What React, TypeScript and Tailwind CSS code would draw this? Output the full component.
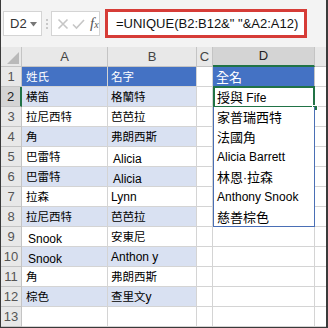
import React from "react";

const FONT = { fontFamily: '"Liberation Sans", "Noto Sans CJK TC", sans-serif' };

const colA = ["姓氏", "横笛", "拉尼西特", "角", "巴雷特", "巴雷特", "拉森", "拉尼西特", "Snook", "Snook", "角", "棕色", ""];
const colB = ["名字", "格蘭特", "芭芭拉", "弗朗西斯", "Alicia", "Alicia", "Lynn", "芭芭拉", "安東尼", "Anthon y", "弗朗西斯", "查里文y", ""];
const colD = ["全名", "授與 Fife", "家普瑞西特", "法國角", "Alicia Barrett", "林恩·拉森", "Anthony Snook", "慈善棕色", "", "", "", "", ""];

function Txt({ s, cjk }: { s: string; cjk: string }) {
  const parts = s.split(/([\u3400-\u9fff]+)/).filter((p) => p.length > 0);
  return (
    <span className="whitespace-pre">
      {parts.map((p, i) =>
        /[\u3400-\u9fff]/.test(p) ? (
          <span key={i} className={cjk} style={{ fontFamily: '"Noto Sans CJK TC", sans-serif' }}>
            {p}
          </span>
        ) : (
          <span key={i}>{p}</span>
        )
      )}
    </span>
  );
}

const isLatin = (s: string) => /^[A-Za-z ]+$/.test(s);

export default function App() {
  return (
    <div
      className="w-[328px] h-[328px] bg-white border-l border-r-2 border-b border-[#3a3a3a] overflow-hidden flex flex-col"
      style={FONT}
    >
      {/* Toolbar */}
      <div className="h-[47px] shrink-0 bg-[#f3f3f3] flex items-center">
        <div className="ml-[2px] w-[39px] h-[25px] bg-white border border-[#d4d4d4] flex items-center pl-[6px] gap-[3px]">
          <span className="text-[13px] text-[#333] leading-none">D2</span>
          <svg width="7" height="5" viewBox="0 0 7 5" className="mt-[1px]">
            <path d="M0 0 L7 0 L3.5 4.5 Z" fill="#777" />
          </svg>
        </div>
        <div className="w-[9px] flex flex-col items-center gap-[2px]">
          <div className="w-[2px] h-[2px] bg-[#c8c8c8]" />
          <div className="w-[2px] h-[2px] bg-[#c8c8c8]" />
          <div className="w-[2px] h-[2px] bg-[#c8c8c8]" />
        </div>
        <div className="w-[49px] h-[25px] bg-white border border-[#d4d4d4] flex items-center pl-[5px] gap-[3px]">
          <svg width="12" height="12" viewBox="0 0 12 12">
            <path d="M1.5 1.5 L10.5 10.5 M10.5 1.5 L1.5 10.5" stroke="#c6c6c6" strokeWidth="1.6" />
          </svg>
          <svg width="13" height="12" viewBox="0 0 13 12">
            <path d="M1 6.5 L4.5 10 L12 2" stroke="#c6c6c6" strokeWidth="1.6" fill="none" />
          </svg>
          <span
            className="text-[15px] italic text-[#555] leading-none ml-[2px]"
            style={{ fontFamily: '"Liberation Serif", serif' }}
          >
            f<span className="text-[10px]">x</span>
          </span>
        </div>
        <div className="ml-[5px] w-[202px] h-[29px] bg-white border-[3px] border-[#d63c37] flex items-center pl-[8px]">
          <span className="text-[13px] text-[#111] leading-none whitespace-pre">=UNIQUE(B2:B12&amp;" "&amp;A2:A12)</span>
        </div>
      </div>

      {/* Column headers */}
      <div className="h-[20px] shrink-0 flex bg-[#e8e8e8] text-[13px] text-[#444]">
        <div className="w-[21px] border-r border-b border-[#c4c4c4] relative">
          <svg width="12" height="12" viewBox="0 0 12 12" className="absolute right-[2px] bottom-[2px]">
            <path d="M12 0 L12 12 L0 12 Z" fill="#b9b9b9" />
          </svg>
        </div>
        <div className="w-[86px] border-r border-b border-[#c4c4c4] flex items-center justify-center">A</div>
        <div className="w-[89px] border-r border-b border-[#c4c4c4] flex items-center justify-center">B</div>
        <div className="w-[16px] border-r border-b border-[#c4c4c4] flex items-center justify-center">C</div>
        <div className="w-[102px] border-r border-b-2 border-r-[#c4c4c4] border-b-[#217346] bg-[#d4d4d4] flex items-center justify-center text-[#222]">
          D
        </div>
        <div className="flex-1 border-b border-[#c4c4c4]" />
      </div>

      {/* Rows */}
      {colA.map((a, i) => {
        const r = i + 1;
        const b = colB[i];
        const d = colD[i];
        const header = r === 1;
        const band = !header && r <= 12 && r % 2 === 0;
        const abBg = header ? "bg-[#4472c4] text-white" : band ? "bg-[#d9e1f2] text-black" : "bg-white text-black";
        const inSpill = r >= 2 && r <= 8;
        const dCls = header
          ? "bg-[#4472c4] text-white border-r border-b border-[#c4c4c4]"
          : inSpill
          ? `bg-white text-black border-l border-r border-[#4a6fb5] ${r === 8 ? "border-b" : ""}`
          : "bg-white border-r border-b border-[#d4d4d4]";
        const lowA = isLatin(a) && !header;
        const lowB = isLatin(b) && !header && (r === 5 || r === 6);
        return (
          <div key={r} className="h-[20px] shrink-0 flex text-[12px]">
            <div
              className={`w-[21px] flex items-center justify-center text-[13px] ${
                r === 2
                  ? "bg-[#d4d4d4] text-[#222] border-r-2 border-b border-r-[#217346] border-b-[#c4c4c4]"
                  : "bg-[#e8e8e8] text-[#555] border-r border-b border-[#c4c4c4]"
              }`}
            >
              {r}
            </div>
            <div
              className={`w-[86px] border-r border-b border-[#d4d4d4] ${abBg} flex ${
                lowA ? "items-end pb-[1px] pl-[6px]" : "items-center pl-[4px]"
              } whitespace-nowrap overflow-hidden leading-none`}
            >
              <Txt s={a} cjk="text-[11.5px]" />
            </div>
            <div
              className={`w-[89px] border-r border-b border-[#d4d4d4] ${abBg} flex ${
                lowB ? "items-end pb-[1px] pl-[5px]" : "items-center pl-[3px]"
              } whitespace-pre overflow-hidden leading-none`}
            >
              <Txt s={b} cjk="text-[11.5px]" />
            </div>
            <div className="w-[16px] border-r border-b border-[#d4d4d4] bg-white" />
            <div className={`w-[102px] relative flex items-center pl-[3px] whitespace-nowrap leading-none ${dCls}`}>
              <Txt s={d} cjk="text-[13px]" />
              {r === 2 && (
                <>
                  <div className="absolute left-[-1px] top-[-1px] right-[-1px] bottom-[-1px] border-2 border-[#217346]" />
                  <div className="absolute right-[-4px] bottom-[-4px] w-[6px] h-[6px] bg-[#217346] border border-white" />
                </>
              )}
            </div>
            <div className="flex-1 border-b border-[#d4d4d4] bg-white" />
          </div>
        );
      })}
    </div>
  );
}
